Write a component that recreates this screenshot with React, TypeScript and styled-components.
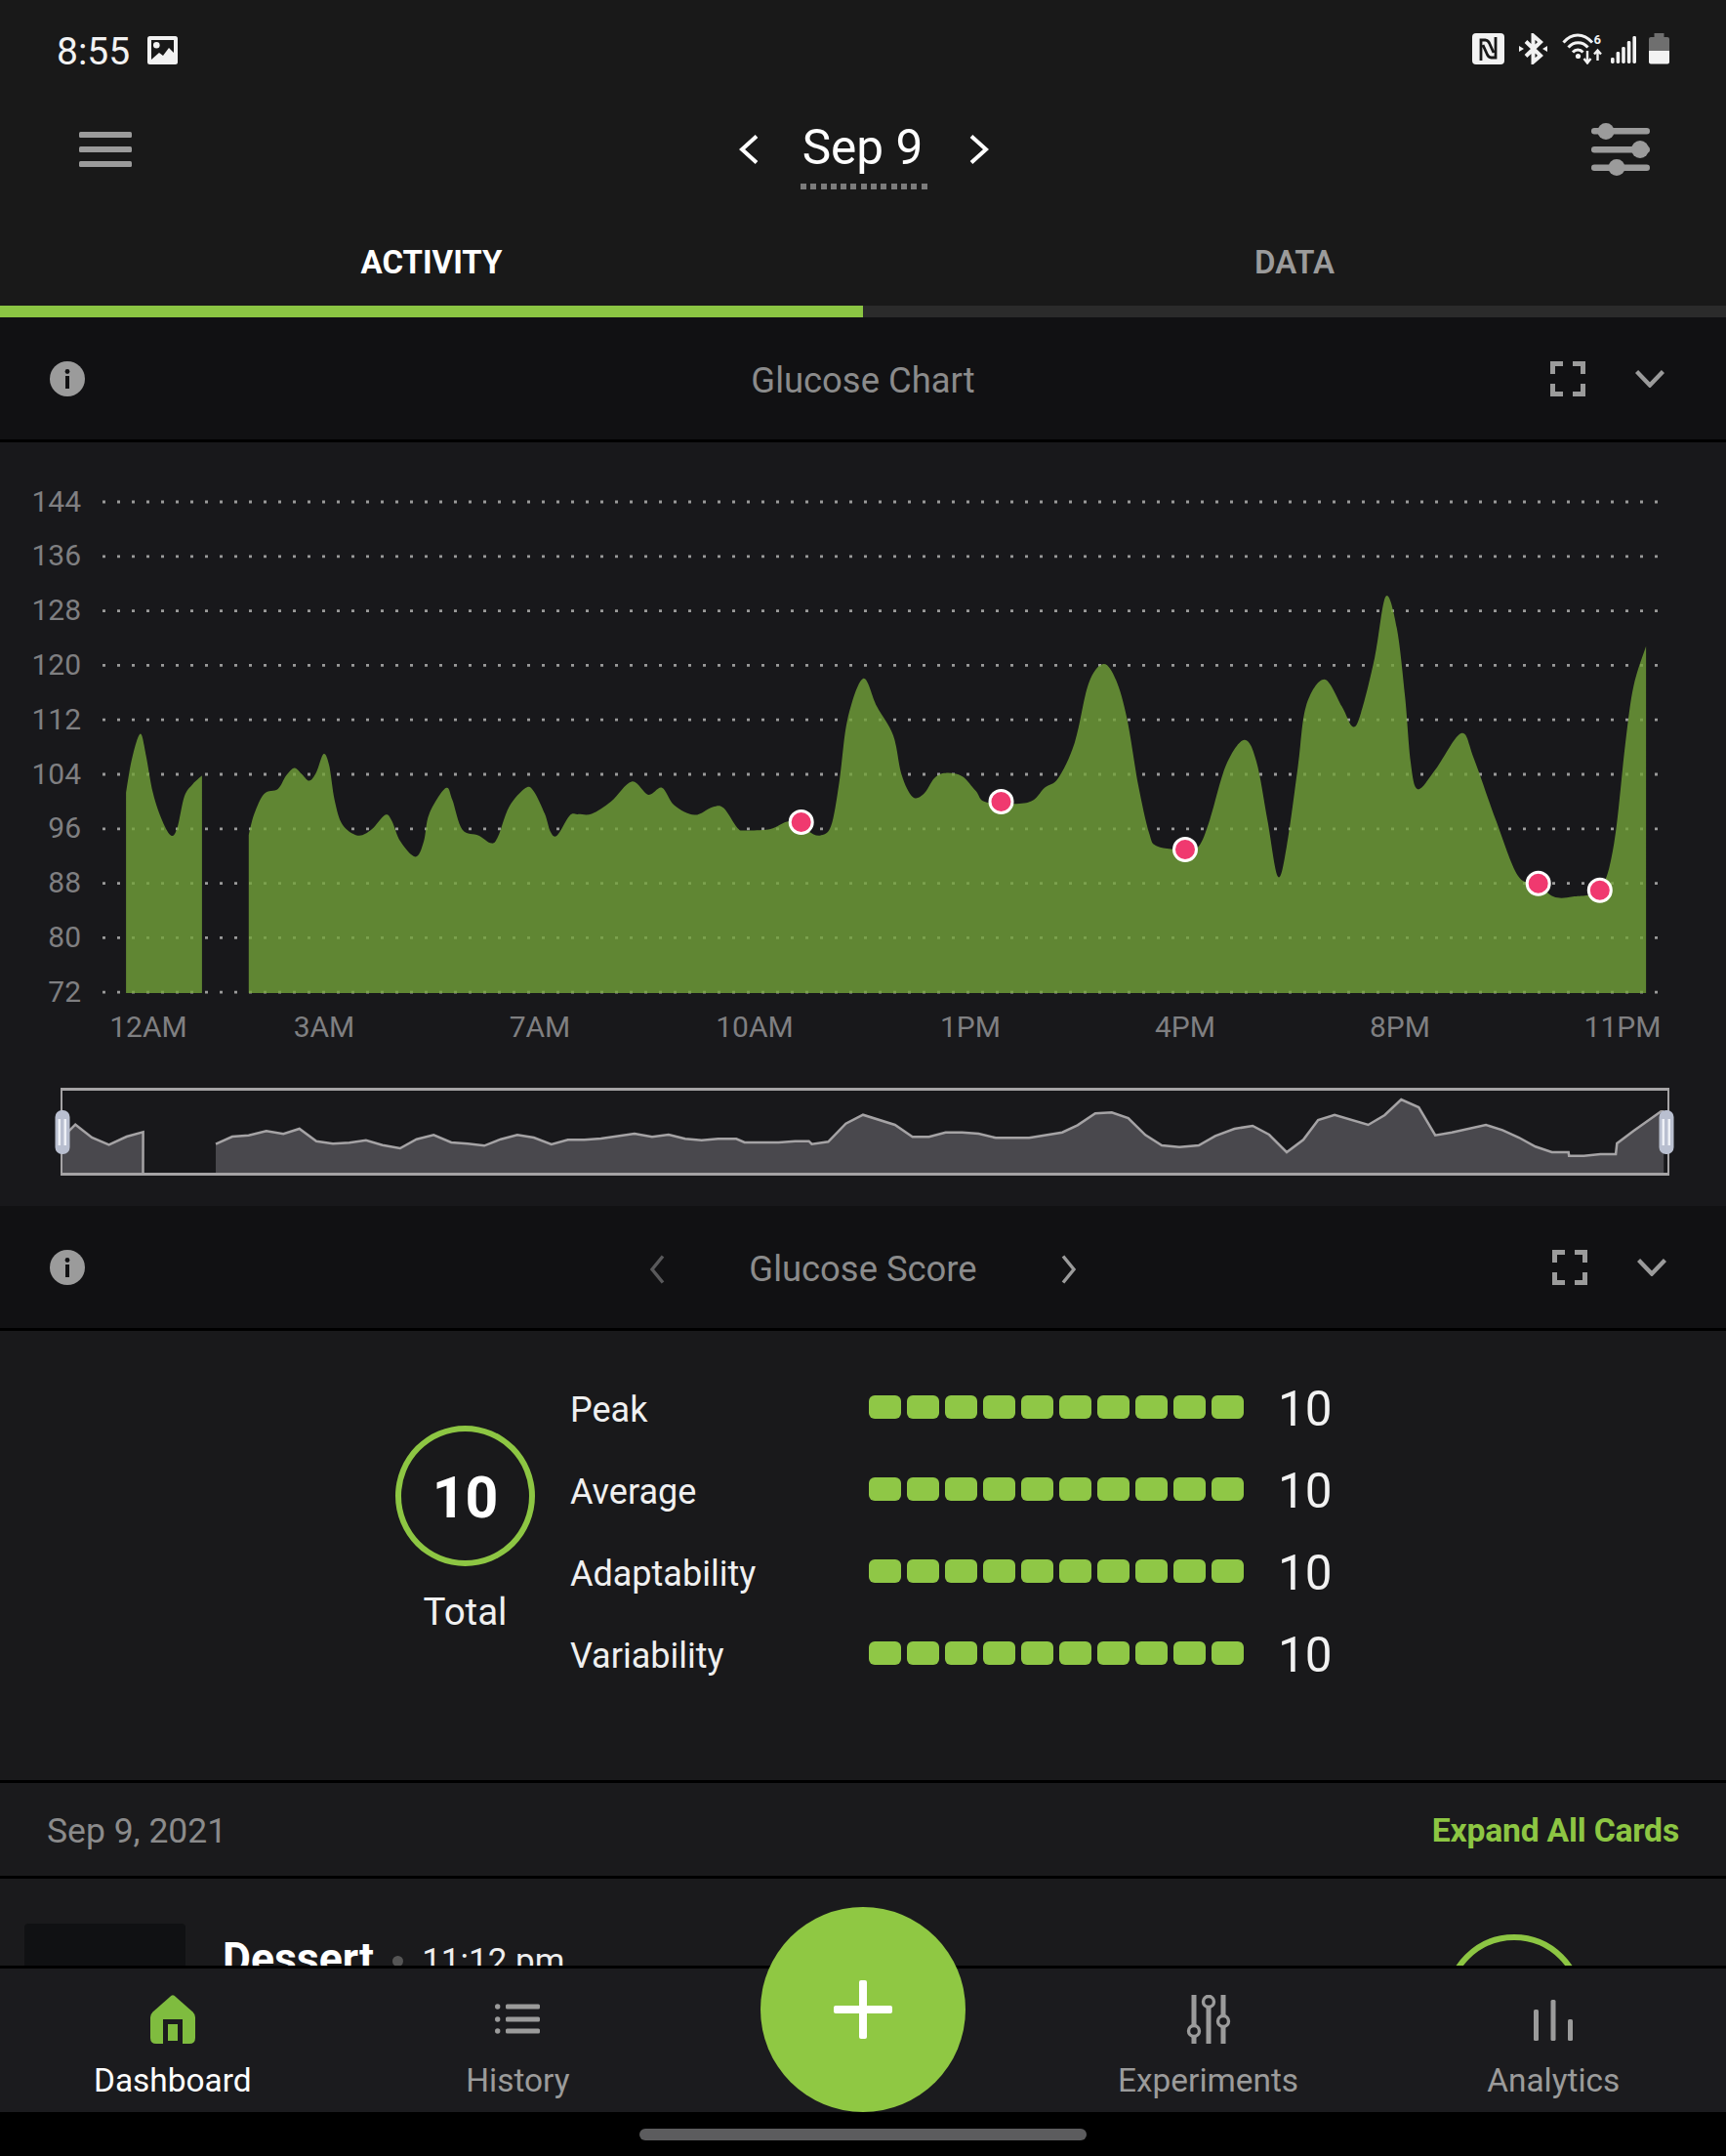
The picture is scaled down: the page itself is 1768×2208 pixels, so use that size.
import React from "react";
import styled, { createGlobalStyle } from "styled-components";

const GlobalStyle = createGlobalStyle`
  html, body { margin: 0; padding: 0; background: #000; }
  body { font-family: Roboto, "Liberation Sans", sans-serif; }
  * { box-sizing: border-box; }
`;

const GREEN = "#8dc643";
const GREY = "#9b9b9b";

const Page = styled.div`
  position: relative;
  width: 1768px;
  height: 2208px;
  overflow: hidden;
  display: flex;
  flex-direction: column;
  background: #19191b;
  color: #fff;
`;

const StatusBar = styled.div`
  height: 100px;
  background: #191919;
  display: flex;
  align-items: flex-start;
  justify-content: space-between;
  padding: 34px 58px 0 58px;
`;
const StatusLeft = styled.div`
  display: flex;
  align-items: flex-start;
  gap: 18px;
  height: 32px;
`;
const Time = styled.span`
  font-size: 39px;
  line-height: 32px;
  padding-top: 3px;
  color: #f2f2f2;
`;
const StatusRight = styled.div`
  display: flex;
  align-items: flex-start;
`;
const Icon = styled.svg<{ $ml?: number; $mt?: number }>`
  display: block;
  flex: none;
  margin-left: ${(p) => p.$ml ?? 0}px;
  margin-top: ${(p) => p.$mt ?? 0}px;
`;

const TopBar = styled.div`
  height: 106px;
  background: #191919;
  display: grid;
  grid-template-columns: 1fr auto 1fr;
  align-items: center;
  padding: 0 78px;
`;
const Hamburger = styled.div`
  padding-left: 3px;
`;
const DateGroup = styled.div`
  display: flex;
  align-items: center;
  margin-left: 2px;
`;
const DateBlock = styled.div`
  position: relative;
  margin: 0 48px 0 45px;
`;
const DateText = styled.div`
  font-size: 49.5px;
  line-height: 56px;
  color: #fff;
  margin-top: -4px;
`;
const DateDots = styled.div`
  position: absolute;
  left: -2px;
  top: 61px;
  width: 130px;
  height: 6px;
  background: repeating-linear-gradient(90deg, #7c7c7c 0 6px, transparent 6px 10.3px);
`;
const RightAlign = styled.div`
  display: flex;
  justify-content: flex-end;
`;

const Tabs = styled.div`
  display: grid;
  grid-template-columns: 1fr 1fr;
  background: #191919;
`;
const Tab = styled.div<{ $active?: boolean }>`
  height: 119px;
  padding-top: 18px;
  display: flex;
  align-items: center;
  justify-content: center;
  font-size: 33px;
  font-weight: ${(p) => (p.$active ? 700 : 600)};
  color: ${(p) => (p.$active ? "#fff" : GREY)};
  border-bottom: 12px solid ${(p) => (p.$active ? "#8bc543" : "#2b2b2b")};
`;

const CardHeader = styled.div`
  height: 128px;
  background: #111113;
  border-bottom: 3px solid #000;
  display: grid;
  grid-template-columns: 1fr auto 1fr;
  align-items: center;
  padding: 0 51px;
`;
const HeaderTitle = styled.div`
  display: flex;
  align-items: center;
  gap: 86px;
  font-size: 36.4px;
  line-height: 40px;
  color: #8b8b8b;
  padding-top: 5px;
`;
const HeaderActions = styled.div<{ $inset: number }>`
  display: flex;
  align-items: center;
  justify-content: flex-end;
  gap: 51px;
  padding-right: ${(p) => p.$inset}px;
`;

const ChartSection = styled.div`
  height: 782px;
  background: #18181b;
`;
const ChartSvg = styled.svg`
  display: block;
`;

const ScoreSection = styled.div`
  height: 460px;
  background: #19191b;
  display: flex;
  align-items: flex-start;
  padding-left: 405px;
`;
const TotalColumn = styled.div`
  width: 143px;
  margin-top: 97px;
  display: flex;
  flex-direction: column;
  align-items: center;
`;
const Ring = styled.div`
  width: 143px;
  height: 144px;
  padding-top: 2px;
  border-radius: 50%;
  border: 6px solid ${GREEN};
  display: flex;
  align-items: center;
  justify-content: center;
  font-size: 59px;
  font-weight: 700;
  color: #fff;
`;
const TotalLabel = styled.div`
  font-size: 38.5px;
  line-height: 44px;
  margin-top: 25px;
  color: #f0f0f0;
`;
const ScoreRows = styled.div`
  margin-left: 36px;
  padding-top: 38px;
  display: flex;
  flex-direction: column;
`;
const ScoreRow = styled.div`
  height: 84px;
  display: flex;
  align-items: center;
`;
const ScoreName = styled.div`
  width: 306px;
  padding-top: 2px;
  font-size: 36px;
  color: #f0f0f0;
`;
const Bars = styled.div`
  width: 384px;
  display: flex;
  justify-content: space-between;
  margin-bottom: 4px;
`;
const BarCell = styled.div`
  width: 33px;
  height: 24px;
  border-radius: 6px;
  background: #8fc746;
`;
const ScoreValue = styled.div`
  margin-left: 35px;
  font-size: 49.5px;
  color: #f2f2f2;
`;

const DateRow = styled.div`
  height: 101px;
  background: #1a1a1c;
  border-top: 3px solid #000;
  border-bottom: 3px solid #000;
  display: flex;
  align-items: center;
  justify-content: space-between;
  padding: 2px 48px 0 48px;
`;
const DateRowText = styled.div`
  font-size: 35.5px;
  color: #8b8b8b;
`;
const ExpandLink = styled.div`
  font-size: 33.7px;
  font-weight: 700;
  color: ${GREEN};
  letter-spacing: -0.2px;
`;

const EntryRow = styled.div`
  height: 89px;
  overflow: hidden;
  background: #1a1a1c;
  display: flex;
  align-items: flex-start;
  padding-left: 25px;
`;
const Thumb = styled.div`
  width: 165px;
  height: 120px;
  margin-top: 46px;
  border-radius: 4px;
  background: #101113;
`;
const EntryTitle = styled.div`
  margin: 58px 0 0 38px;
  font-size: 44.5px;
  line-height: 48px;
  font-weight: 700;
  color: #fff;
`;
const EntryDot = styled.div`
  width: 11px;
  height: 11px;
  border-radius: 50%;
  background: #555;
  margin: 79px 0 0 19px;
`;
const EntryTime = styled.div`
  margin: 61px 0 0 19px;
  font-size: 35px;
  line-height: 48px;
  color: #eee;
`;
const EntryRing = styled.div`
  width: 142px;
  height: 142px;
  margin: 57px 146px 0 auto;
  border-radius: 50%;
  border: 6px solid ${GREEN};
`;

const BottomNav = styled.nav`
  height: 150px;
  background: #1b1b1e;
  border-top: 3px solid #000;
  display: grid;
  grid-template-columns: repeat(5, 1fr);
`;
const NavItem = styled.div<{ $active?: boolean }>`
  display: flex;
  flex-direction: column;
  align-items: center;
  padding-top: 27px;
  color: ${(p) => (p.$active ? "#fff" : GREY)};
`;
const NavLabel = styled.div`
  margin-top: 18px;
  font-size: 33.4px;
  line-height: 40px;
`;
const HomeBar = styled.div`
  height: 45px;
  background: #000;
  display: flex;
  justify-content: center;
  padding-top: 17px;
`;
const HomePill = styled.div`
  width: 458px;
  height: 12px;
  border-radius: 6px;
  background: #5c5c5e;
`;
const Fab = styled.div`
  position: absolute;
  left: 779px;
  top: 1953px;
  width: 210px;
  height: 210px;
  border-radius: 50%;
  background: #8fc843;
  display: flex;
  align-items: center;
  justify-content: center;
`;

/* ---------- chart data (read off the reference) ---------- */
type P = [number, number];
const z3 = (a: number[]): P[] => {
  const r: P[] = [];
  for (let i = 0; i < a.length; i += 2) r.push([a[i] / 1.774, 480 + a[i + 1] / 2.8]);
  return r;
};
const z4 = (a: number[]): P[] => {
  const r: P[] = [];
  for (let i = 0; i < a.length; i += 2) r.push([884 + a[i] / 1.774, 580 + a[i + 1] / 3]);
  return r;
};
const m5 = (a: number[]): P[] => {
  const r: P[] = [];
  for (let i = 0; i < a.length; i += 2) r.push([a[i] / 1.774, 1090 + a[i + 1] / 3]);
  return r;
};
const m6 = (a: number[]): P[] => {
  const r: P[] = [];
  for (let i = 0; i < a.length; i += 2) r.push([884 + a[i] / 1.774, 1090 + a[i + 1] / 3]);
  return r;
};
const smooth = (pts: P[]) => {
  let d = "";
  for (let i = 0; i < pts.length - 1; i++) {
    const p0 = pts[Math.max(i - 1, 0)];
    const p1 = pts[i];
    const p2 = pts[i + 1];
    const p3 = pts[Math.min(i + 2, pts.length - 1)];
    const c1 = [p1[0] + (p2[0] - p0[0]) / 6, p1[1] + (p2[1] - p0[1]) / 6];
    const c2 = [p2[0] - (p3[0] - p1[0]) / 6, p2[1] - (p3[1] - p1[1]) / 6];
    d += `C${c1[0].toFixed(1)} ${c1[1].toFixed(1)} ${c2[0].toFixed(1)} ${c2[1].toFixed(1)} ${p2[0].toFixed(1)} ${p2[1].toFixed(1)}`;
  }
  return d;
};
const area = (pts: P[], base: number) =>
  `M${pts[0][0].toFixed(1)} ${base}L${pts[0][0].toFixed(1)} ${pts[0][1].toFixed(1)}${smooth(pts)}L${pts[pts.length - 1][0].toFixed(1)} ${base}Z`;
const poly = (pts: P[]) => pts.map((p) => `${p[0].toFixed(1)},${p[1].toFixed(1)}`).join(" ");
const polyArea = (pts: P[], base: number) =>
  poly([[pts[0][0], base], ...pts, [pts[pts.length - 1][0], base]]);

const seg1 = z3([229, 930, 240, 830, 255, 760, 265, 820, 278, 930, 295, 1010, 311, 1052, 322, 1030, 335, 940, 350, 905, 367, 880]);
const seg2 = [
  ...z3([452, 1050, 462, 990, 480, 932, 505, 918, 520, 880, 535, 858, 548, 875, 562, 895, 575, 870, 588, 818, 598, 850, 608, 950, 622, 1020, 650, 1052, 675, 1035, 700, 993, 712, 1010, 728, 1070, 755, 1113, 770, 1070, 780, 990, 810, 916, 822, 950, 840, 1035, 870, 1052, 893, 1074, 905, 1055, 925, 970, 955, 916, 970, 925, 990, 990, 1000, 1040, 1012, 1052, 1035, 995, 1050, 991, 1075, 990, 1110, 955, 1148, 897, 1178, 935, 1203, 915, 1225, 965, 1262, 993, 1295, 970, 1315, 973, 1340, 1030, 1355, 1037, 1400, 1033, 1430, 1012, 1456, 1015, 1470, 1040, 1490, 1052, 1510, 1025, 1525, 900, 1540, 720]),
  ...z4([0, 345, 25, 430, 55, 520, 70, 640, 90, 708, 110, 700, 130, 650, 150, 635, 180, 645, 205, 690, 225, 725, 300, 725, 330, 680, 355, 650, 385, 540, 410, 360, 437, 300, 460, 350, 480, 470, 500, 670, 520, 820, 535, 860, 585, 870, 610, 860, 630, 780, 660, 610, 693, 533, 715, 600, 735, 780, 754, 953, 770, 860, 790, 620, 805, 430, 838, 347, 870, 430, 890, 493, 905, 450, 930, 280, 950, 92, 970, 190, 985, 400, 995, 600, 1008, 685, 1040, 625, 1087, 513, 1110, 590, 1150, 780, 1190, 950, 1225, 975, 1255, 1015, 1290, 1015, 1340, 990, 1365, 850, 1385, 550, 1400, 370, 1423, 245]),
];
const mini1 = m5([113, 222, 125, 205, 137, 185, 167, 225, 198, 247, 230, 222, 260, 208]);
const mini2 = [
  ...m5([392, 245, 422, 222, 452, 218, 484, 205, 515, 214, 544, 198, 575, 236, 605, 244, 635, 241, 665, 233, 695, 248, 727, 258, 757, 230, 788, 217, 820, 240, 850, 244, 880, 250, 910, 230, 940, 217, 970, 225, 1002, 246, 1032, 232, 1062, 232, 1092, 228, 1153, 213, 1185, 223, 1215, 216, 1245, 229, 1275, 233, 1305, 229, 1338, 229, 1353, 240, 1415, 240, 1445, 236, 1470, 236, 1475, 245, 1505, 238, 1537, 182]),
  ...m6([0, 155, 58, 186, 90, 223, 120, 223, 150, 209, 180, 209, 210, 213, 241, 226, 302, 226, 362, 209, 390, 187, 422, 151, 452, 148, 482, 165, 513, 217, 543, 249, 575, 254, 610, 249, 640, 220, 675, 198, 708, 189, 738, 216, 770, 270, 800, 232, 827, 171, 857, 155, 918, 186, 948, 156, 978, 108, 1010, 132, 1040, 218, 1070, 209, 1132, 186, 1162, 202, 1192, 225, 1222, 253, 1252, 270, 1282, 270, 1283, 281, 1310, 281, 1340, 276, 1368, 276, 1370, 243, 1400, 205, 1450, 145, 1455, 145]),
];

const yTicks = [144, 136, 128, 120, 112, 104, 96, 88, 80, 72];
const xTicks: [string, number][] = [["12AM", 152], ["3AM", 332], ["7AM", 553], ["10AM", 773], ["1PM", 994], ["4PM", 1214], ["8PM", 1434], ["11PM", 1662]];
const markers: P[] = [[820.7, 842], [1025.5, 821], [1214, 870], [1575.7, 904.7], [1638.8, 911.7]];
const scores = ["Peak", "Average", "Adaptability", "Variability"];
const cells = [0, 1, 2, 3, 4, 5, 6, 7, 8, 9];

/* ---------- icons ---------- */
const Info = () => (
  <Icon width="36" height="36" viewBox="0 0 36 36">
    <circle cx="18" cy="18" r="18" fill={GREY} />
    <circle cx="18" cy="10.5" r="2.4" fill="#111113" />
    <rect x="16" y="15" width="4" height="13" fill="#111113" />
  </Icon>
);
const Fullscreen = () => (
  <Icon width="36" height="36" viewBox="0 0 36 36" fill="none" stroke={GREY} strokeWidth="5">
    <path d="M2.5 13V2.5H13M23 2.5H33.5V13M33.5 23V33.5H23M13 33.5H2.5V23" />
  </Icon>
);
const ChevronDown = () => (
  <Icon width="30" height="18" viewBox="0 0 30 18" fill="none" stroke={GREY} strokeWidth="4.4">
    <path d="M1.5 1.5L15 15.5L28.5 1.5" />
  </Icon>
);
const ChevronH = ({ dir, color, h = 30, w = 20, sw = 4 }: { dir: "l" | "r"; color: string; h?: number; w?: number; sw?: number }) => (
  <Icon width={w} height={h} viewBox={`0 0 ${w} ${h}`} fill="none" stroke={color} strokeWidth={sw}>
    <path d={dir === "l" ? `M${w - 2} 1.5L3 ${h / 2}L${w - 2} ${h - 1.5}` : `M2 1.5L${w - 3} ${h / 2}L2 ${h - 1.5}`} />
  </Icon>
);

const App = () => (
  <Page>
    <GlobalStyle />
    <StatusBar>
      <StatusLeft>
        <Time>8:55</Time>
        <Icon $mt={3} width="31" height="29" viewBox="0 0 31 29">
          <rect width="31" height="29" rx="2.5" fill="#f2f2f2" />
          <path d="M4 4H27V17L22 12L16 20L12 17L4 24Z" fill="#191919" />
          <circle cx="9.3" cy="9.3" r="3.3" fill="#f2f2f2" />
        </Icon>
      </StatusLeft>
      <StatusRight>
        <Icon width="33" height="32" viewBox="0 0 33 32">
          <rect width="33" height="32" rx="4" fill="#f2f2f2" />
          <path d="M9 28V7H13.5Q16 7 17.5 10L22 20M24 4V25H19.5Q17 25 15.5 22L11 12" fill="none" stroke="#191919" strokeWidth="2.8" />
        </Icon>
        <Icon $ml={15} width="29" height="32" viewBox="0 0 29 32">
          <path d="M7 8.5L22 23L14.5 29.5V2.5L22 9L7 23.5" fill="none" stroke="#f2f2f2" strokeWidth="4" />
          <path d="M0 13L5 16L0 19ZM29 13L24 16L29 19Z" fill="#f2f2f2" />
        </Icon>
        <Icon $ml={15} width="44" height="32" viewBox="0 0 44 32" fill="none" stroke="#f2f2f2" strokeWidth="3">
          <path d="M1.5 9.5C10 -0.5 22 -0.5 31 9.5M6.5 14.5C12 8 21 8 26.5 14.5M11 19.5C14 16 18.5 16 21.5 19.5" />
          <circle cx="16.5" cy="23.5" r="2.6" fill="#f2f2f2" stroke="none" />
          <path d="M26 18V30M22.5 26L26 30.5L29.5 26M36.5 28V18M33 21.5L36.5 17.5L40 21.5" strokeWidth="2.4" />
          <text x="32.5" y="11" fontSize="13" fontWeight="700" fill="#f2f2f2" stroke="none" fontFamily="Roboto, sans-serif">6</text>
        </Icon>
        <Icon $ml={6} width="26" height="32" viewBox="0 0 26 32" fill="#f2f2f2">
          <rect x="0" y="25" width="3.6" height="6" rx="1.4" />
          <rect x="5.6" y="19" width="3.6" height="12" rx="1.4" />
          <rect x="11.2" y="14" width="3.6" height="17" rx="1.4" />
          <rect x="16.8" y="8" width="3.6" height="23" rx="1.4" />
          <rect x="22.4" y="3" width="3.6" height="28" rx="1.4" />
        </Icon>
        <Icon $ml={13} width="21" height="32" viewBox="0 0 21 32">
          <path d="M5.5 0H15.5V4H19Q21 4 21 6V18H0V6Q0 4 2 4H5.5Z" fill="#6f6f6f" />
          <path d="M0 18H21V29.5Q21 31.5 19 31.5H2Q0 31.5 0 29.5Z" fill="#f2f2f2" />
        </Icon>
      </StatusRight>
    </StatusBar>

    <TopBar>
      <Hamburger>
        <Icon width="54" height="36" viewBox="0 0 54 36" fill={GREY}>
          <rect y="0" width="54" height="6" rx="1.5" />
          <rect y="15" width="54" height="6" rx="1.5" />
          <rect y="30" width="54" height="6" rx="1.5" />
        </Icon>
      </Hamburger>
      <DateGroup>
        <ChevronH dir="l" color="#fff" />
        <DateBlock>
          <DateText>Sep 9</DateText>
          <DateDots />
        </DateBlock>
        <ChevronH dir="r" color="#fff" />
      </DateGroup>
      <RightAlign>
        <Icon width="60" height="54" viewBox="0 0 60 54" fill={GREY}>
          <rect y="5" width="60" height="6.5" rx="3.2" />
          <rect y="24" width="60" height="6.5" rx="3.2" />
          <rect y="42.5" width="60" height="6.5" rx="3.2" />
          <circle cx="15" cy="8.5" r="8.5" />
          <circle cx="50" cy="27" r="9" />
          <circle cx="26" cy="45.5" r="8.5" />
        </Icon>
      </RightAlign>
    </TopBar>

    <Tabs>
      <Tab $active>ACTIVITY</Tab>
      <Tab>DATA</Tab>
    </Tabs>

    <CardHeader>
      <Info />
      <HeaderTitle>Glucose Chart</HeaderTitle>
      <HeaderActions $inset={12}>
        <Fullscreen />
        <ChevronDown />
      </HeaderActions>
    </CardHeader>

    <ChartSection>
      <ChartSvg width="1768" height="782" viewBox="0 453 1768 782">
        {yTicks.map((t, i) => (
          <g key={t}>
            <line x1="105" x2="1700" y1={514 + i * 55.8} y2={514 + i * 55.8} stroke="#9a9a9a" strokeWidth="2.8" strokeDasharray="3 12" />
            <text x="83" y={514 + i * 55.8 + 9.5} fontSize="30" fill="#7f7f81" textAnchor="end" fontFamily="Roboto, sans-serif">{t}</text>
          </g>
        ))}
        <path d={area(seg1, 1017)} fill="#73a339" fillOpacity="0.8" />
        <path d={area(seg2, 1017)} fill="#73a339" fillOpacity="0.8" />
        {markers.map((m) => (
          <circle key={m[0]} cx={m[0]} cy={m[1]} r="11.5" fill="#f0396f" stroke="#fff" strokeWidth="3" />
        ))}
        {xTicks.map(([l, x]) => (
          <text key={l} x={x} y="1062" fontSize="30" fill="#7f7f81" textAnchor="middle" fontFamily="Roboto, sans-serif">{l}</text>
        ))}
        <polygon points={polyArea(mini1, 1201)} fill="#49484d" />
        <polygon points={polyArea(mini2, 1201)} fill="#49484d" />
        <polyline points={poly([...mini1, [146.5, 1201]])} fill="none" stroke="#a5a3a5" strokeWidth="2.5" />
        <polyline points={poly(mini2)} fill="none" stroke="#a5a3a5" strokeWidth="2.5" />
        <rect x="62" y="1114" width="1648" height="3" fill="#a5a3a5" />
        <rect x="62" y="1201" width="1648" height="3" fill="#a5a3a5" />
        <rect x="62" y="1114" width="2" height="90" fill="#a5a3a5" />
        <rect x="1708" y="1114" width="2" height="90" fill="#a5a3a5" />
        <rect x="56.5" y="1137" width="15" height="45" rx="7" fill="#b9bfd0" />
        <rect x="59.5" y="1146" width="2.5" height="27" fill="#eef0f6" />
        <rect x="65.5" y="1146" width="2.5" height="27" fill="#eef0f6" />
        <rect x="1699.5" y="1137" width="15" height="45" rx="7" fill="#b9bfd0" />
        <rect x="1702.5" y="1146" width="2.5" height="27" fill="#eef0f6" />
        <rect x="1708.5" y="1146" width="2.5" height="27" fill="#eef0f6" />
      </ChartSvg>
    </ChartSection>

    <CardHeader>
      <Info />
      <HeaderTitle>
        <ChevronH dir="l" color="#59595b" w={16} sw={3.4} />
        Glucose Score
        <ChevronH dir="r" color={GREY} w={16} sw={3.4} />
      </HeaderTitle>
      <HeaderActions $inset={10}>
        <Fullscreen />
        <ChevronDown />
      </HeaderActions>
    </CardHeader>

    <ScoreSection>
      <TotalColumn>
        <Ring>10</Ring>
        <TotalLabel>Total</TotalLabel>
      </TotalColumn>
      <ScoreRows>
        {scores.map((s) => (
          <ScoreRow key={s}>
            <ScoreName>{s}</ScoreName>
            <Bars>
              {cells.map((c) => (
                <BarCell key={c} />
              ))}
            </Bars>
            <ScoreValue>10</ScoreValue>
          </ScoreRow>
        ))}
      </ScoreRows>
    </ScoreSection>

    <DateRow>
      <DateRowText>Sep 9, 2021</DateRowText>
      <ExpandLink>Expand All Cards</ExpandLink>
    </DateRow>

    <EntryRow>
      <Thumb />
      <EntryTitle>Dessert</EntryTitle>
      <EntryDot />
      <EntryTime>11:12 pm</EntryTime>
      <EntryRing />
    </EntryRow>

    <BottomNav>
      <NavItem $active>
        <Icon width="50" height="50" viewBox="0 0 50 50">
          <path d="M23.5 0.8Q25 -0.4 26.5 0.8L45.5 17.5Q48 20 48 23V44Q48 50 42 50H8Q2 50 2 44V23Q2 20 4.5 17.5Z" fill="#7fbc3f" />
          <rect x="15" y="25" width="20" height="25" fill="#1b1b1e" />
          <rect x="20" y="30" width="10" height="17" fill="#7fbc3f" />
        </Icon>
        <NavLabel>Dashboard</NavLabel>
      </NavItem>
      <NavItem>
        <Icon width="46" height="50" viewBox="0 0 46 50" fill={GREY}>
          <circle cx="2.7" cy="12" r="2.7" />
          <rect x="11" y="9.5" width="35" height="5" rx="1.5" />
          <circle cx="2.7" cy="25" r="2.7" />
          <rect x="11" y="22.5" width="35" height="5" rx="1.5" />
          <circle cx="2.7" cy="37" r="2.7" />
          <rect x="11" y="34.5" width="35" height="5" rx="1.5" />
        </Icon>
        <NavLabel>History</NavLabel>
      </NavItem>
      <NavItem />
      <NavItem>
        <Icon width="46" height="50" viewBox="0 0 46 50" fill="none" stroke={GREY}>
          <path d="M8 0V50M23 0V50M38 0V50" strokeWidth="5" />
          <circle cx="8" cy="37" r="5.5" fill="#1b1b1e" strokeWidth="3.4" />
          <circle cx="23" cy="7" r="5.5" fill="#1b1b1e" strokeWidth="3.4" />
          <circle cx="38" cy="27" r="5.5" fill="#1b1b1e" strokeWidth="3.4" />
        </Icon>
        <NavLabel>Experiments</NavLabel>
      </NavItem>
      <NavItem>
        <Icon width="40" height="50" viewBox="0 0 40 50" fill={GREY}>
          <rect x="0" y="15" width="5" height="32" rx="1.5" />
          <rect x="17.5" y="5" width="5" height="42" rx="1.5" />
          <rect x="35" y="25" width="5" height="22" rx="1.5" />
        </Icon>
        <NavLabel>Analytics</NavLabel>
      </NavItem>
    </BottomNav>

    <HomeBar>
      <HomePill />
    </HomeBar>

    <Fab>
      <Icon width="60" height="60" viewBox="0 0 60 60" fill="#fff">
        <rect x="0" y="26" width="60" height="8" rx="2" />
        <rect x="26" y="0" width="8" height="60" rx="2" />
      </Icon>
    </Fab>
  </Page>
);

export default App;
